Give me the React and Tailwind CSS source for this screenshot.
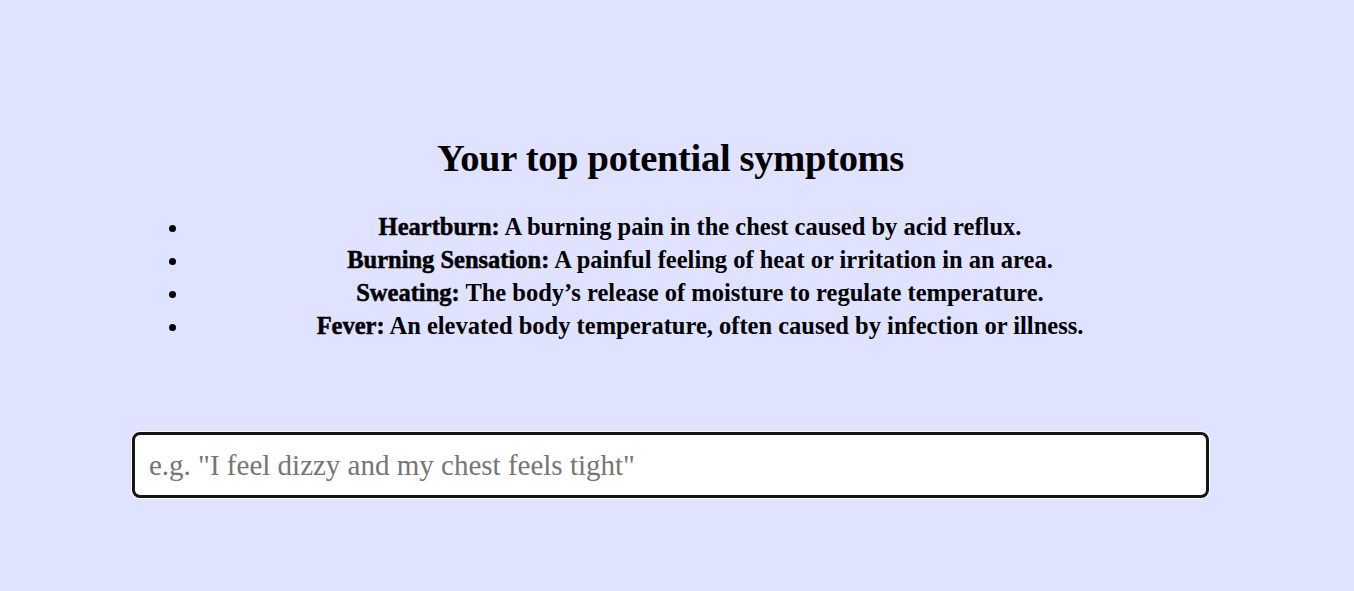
const symptoms = [
  { name: "Heartburn", text: "A burning pain in the chest caused by acid reflux." },
  { name: "Burning Sensation", text: "A painful feeling of heat or irritation in an area." },
  { name: "Sweating", text: "The body\u2019s release of moisture to regulate temperature." },
  { name: "Fever", text: "An elevated body temperature, often caused by infection or illness." },
];

export default function App() {
  return (
    <div className="min-h-[591px] w-full bg-[#dfe3ff] pr-[13px] font-['Liberation_Serif',serif] text-black">
      <div className="mx-auto flex w-[1079px] flex-col pt-[133px]">
        <h1 className="text-center text-[38.5px] font-bold leading-[50px] tracking-[-0.3px]">
          Your top potential symptoms
        </h1>
        <ul className="mt-[27px] list-disc pl-[59px] text-center text-[24.5px] font-bold leading-[33px]">
          {symptoms.map((s) => (
            <li key={s.name}>
              <span className="[-webkit-text-stroke:0.5px_black]">{s.name}:</span> {s.text}
            </li>
          ))}
        </ul>
        <div className="mt-[89px] rounded-[9px] bg-white p-px">
          <input
            type="text"
            placeholder={'e.g. "I feel dizzy and my chest feels tight"'}
            className="block h-[66px] w-full rounded-[8px] border-[3px] border-[#151515] bg-white px-[14px] font-['Liberation_Serif',serif] text-[29px] text-black outline-none placeholder:text-[#757575]"
          />
        </div>
      </div>
    </div>
  );
}
